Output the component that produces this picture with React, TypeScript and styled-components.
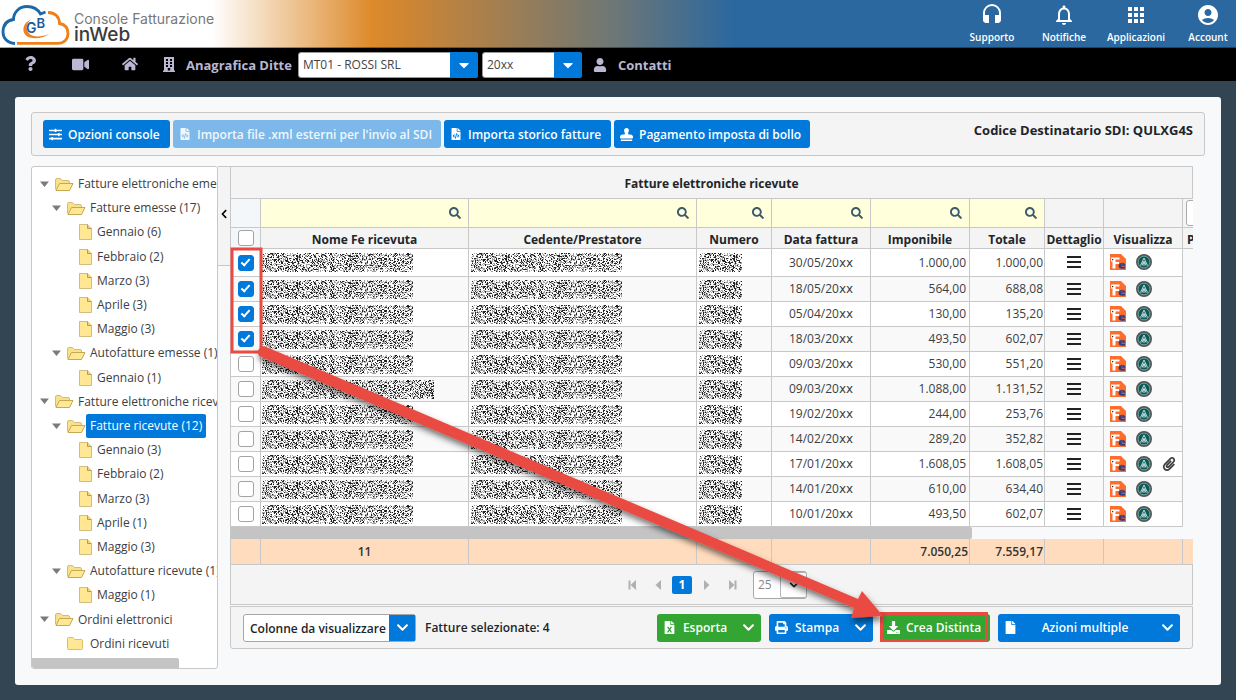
import React from "react";
import styled, { createGlobalStyle, css } from "styled-components";
import {
  FaQuestion,
  FaVideo,
  FaHome,
  FaUser,
  FaFileCode,
  FaStamp,
  FaSearch,
  FaPaperclip,
  FaFileExcel,
  FaPrint,
  FaDownload,
  FaFile,
  FaChevronDown,
  FaChevronLeft,
  FaCaretDown,
  FaSlidersH,
} from "react-icons/fa";
import { MdHeadset, MdNotificationsNone, MdApps, MdAccountCircle } from "react-icons/md";

const blue = "#0079da";
const green = "#33a532";
const red = "#e94b43";
const line = "#c8c8c8";
const nav = "#b9b7d2";

const Global = createGlobalStyle`
  *, *::before, *::after { box-sizing: border-box; }
  body {
    margin: 0;
    background: #334552;
    color: #212529;
    font-family: "Open Sans", "Noto Sans", sans-serif;
    font-size: 12px;
  }
  button, input, select { font: inherit; color: inherit; margin: 0; }
  svg { display: block; flex: none; }
`;

/* ---------- header ---------- */

const Header = styled.header`
  display: flex;
  justify-content: space-between;
  align-items: center;
  height: 48px;
  border-bottom: 1px solid rgba(0, 0, 0, 0.35);
  background: linear-gradient(90deg, #fff 212px, #dd8a2b 372px, #cc8534 410px, #6a7678 620px, #2b689f 735px);
`;

const Brand = styled.div`
  display: flex;
  align-items: center;
  gap: 4px;
  padding-left: 1px;
`;

const BrandText = styled.div`
  display: flex;
  flex-direction: column;
  padding-top: 7px;
  font-family: Inter, "Open Sans", sans-serif;
  font-size: 14px;
  line-height: 16px;
  color: #77787b;
  white-space: nowrap;
  strong {
    font-size: 19px;
    font-weight: 500;
    color: #3b3b3d;
  }
`;

const QuickLinks = styled.nav`
  display: flex;
  gap: 16px;
`;

const QuickLink = styled.a`
  display: flex;
  flex-direction: column;
  align-items: center;
  gap: 3px;
  width: 56px;
  color: #fff;
  font-size: 10px;
  line-height: 14px;
  font-weight: 600;
  text-decoration: none;
`;

/* ---------- black navigation bar ---------- */

const NavBar = styled.nav`
  display: flex;
  align-items: center;
  height: 33px;
  padding-left: 21px;
  background: #000;
  color: ${nav};
`;

const NavIcons = styled.div`
  display: flex;
  gap: 32px;
  margin-right: 24px;
`;

const NavIcon = styled.a`
  display: flex;
  justify-content: center;
  width: 18px;
  color: inherit;
`;

const NavLink = styled.a`
  display: flex;
  align-items: center;
  gap: 11px;
  padding-right: 2px;
  color: inherit;
  font-size: 13px;
  font-weight: 700;
  text-decoration: none;
  white-space: nowrap;
`;

const Contacts = styled(NavLink)`
  margin-left: 11px;
`;

const Picker = styled.label<{ $width: number }>`
  display: flex;
  width: ${(p) => p.$width}px;
  height: 26px;
  margin-left: 4px;
  position: relative;
  select {
    width: 100%;
    padding: 0 32px 0 4px;
    border: 1px solid #999;
    border-radius: 3px;
    background: #fff;
    color: #444;
    appearance: none;
  }
`;

const PickerCaret = styled.span`
  position: absolute;
  top: 0;
  right: 0;
  bottom: 0;
  display: flex;
  align-items: center;
  justify-content: center;
  width: 28px;
  border-radius: 0 3px 3px 0;
  background: ${blue};
  color: #fff;
  pointer-events: none;
`;

/* ---------- page card ---------- */

const Card = styled.main`
  margin: 16px 15px 15px;
  padding: 15px 16px 16px;
  border-radius: 3px;
  background: #f8f9fb;
`;

const Toolbar = styled.div`
  display: flex;
  align-items: center;
  gap: 3px;
  height: 44px;
  margin-bottom: 10px;
  padding: 0 11px;
  border: 1px solid ${line};
  border-radius: 3px;
  background: #f4f4f4;
`;

const Button = styled.button<{ $tone?: string; $width?: number }>`
  display: flex;
  align-items: center;
  gap: 6px;
  height: 28px;
  width: ${(p) => (p.$width ? p.$width + "px" : "auto")};
  padding: 0 6px;
  border: 0;
  border-radius: 3px;
  background: ${(p) => p.$tone || blue};
  color: #fff;
  font-weight: 600;
  white-space: nowrap;
  position: relative;
  &:disabled {
    background: #7cb8e9;
    color: #eff7fd;
  }
`;

const ButtonLabel = styled.span`
  flex: 1;
  padding-right: 8px;
  text-align: center;
`;

const Marker = styled.span`
  position: absolute;
  inset: -2px 2px 0 -1px;
  border: 3px solid ${red};
`;

const Recipient = styled.div`
  align-self: flex-start;
  margin-left: auto;
  padding-top: 8px;
  font-size: 13px;
  line-height: 18px;
  font-weight: 700;
  white-space: nowrap;
`;

const Columns = styled.div`
  display: flex;
  align-items: flex-start;
  padding-right: 12px;
`;

/* ---------- tree ---------- */

const TreePanel = styled.aside`
  display: flex;
  flex-direction: column;
  flex: none;
  width: 187px;
  height: 503px;
  padding-top: 5px;
  border: 1px solid ${line};
  border-radius: 3px;
  background: #fff;
  overflow: hidden;
`;

const TreeList = styled.ul`
  display: grid;
  grid-auto-rows: 1fr;
  flex: 1;
  margin: 0 0 2px;
  padding: 0;
  list-style: none;
`;

const TreeItem = styled.li<{ $pad: number }>`
  display: flex;
  align-items: center;
  padding-left: ${(p) => p.$pad}px;
  color: #3c4043;
  white-space: nowrap;
`;

const Toggle = styled.span`
  width: 15px;
  color: #7b7b7b;
`;

const TreeLabel = styled.a<{ $active?: boolean }>`
  padding: 3px 4px;
  line-height: 18px;
  border-radius: 2px;
  color: inherit;
  text-decoration: none;
  ${(p) =>
    p.$active &&
    css`
      background: ${blue};
      color: #fff;
    `}
`;

const TreeScroll = styled.div`
  width: 147px;
  height: 10px;
  border-radius: 0 2px 0 2px;
  background: #c4c4c4;
`;

const Splitter = styled.button`
  display: flex;
  align-items: center;
  justify-content: center;
  flex: none;
  width: 12px;
  height: 100px;
  padding: 0 0 4px;
  border: 0;
  border-top: 1px solid ${line};
  border-bottom: 1px solid ${line};
  background: #f4f4f4;
  color: #000;
`;

/* ---------- grid ---------- */

const GridPanel = styled.section`
  flex: 1;
  min-width: 0;
  position: relative;
`;

const GridTitle = styled.h2`
  margin: 0;
  height: 33px;
  border: 1px solid ${line};
  background: #f4f4f4;
  font-size: 12px;
  line-height: 33px;
  font-weight: 700;
  text-align: center;
`;

const GridClip = styled.div`
  border-left: 1px solid ${line};
  overflow: hidden;
`;

const Table = styled.table`
  width: 100%;
  border-collapse: separate;
  border-spacing: 0;
  table-layout: fixed;
`;

const FilterCell = styled.td<{ $tone?: string }>`
  height: 29px;
  padding: 0;
  border-right: 1px solid ${line};
  border-bottom: 1px solid ${line};
  background: ${(p) => p.$tone || "#f4f4f4"};
  overflow: hidden;
  &:last-child {
    border-right: 0;
  }
`;

const HeadCell = styled.th<{ $plain?: boolean }>`
  height: 21px;
  padding: ${(p) => (p.$plain ? 0 : 3)}px 0 0;
  border-right: 1px solid ${line};
  border-bottom: 1px solid ${line};
  background: ${(p) => (p.$plain ? "#f3f7fa" : "#f4f4f4")};
  font-weight: 700;
  line-height: 17px;
  white-space: nowrap;
  overflow: hidden;
  &:last-child {
    padding-left: 4px;
    border-right: 0;
    text-align: left;
  }
`;

const FilterField = styled.label`
  display: flex;
  align-items: center;
  padding-right: 7px;
  color: #3d5a6c;
  input {
    flex: 1;
    min-width: 0;
    height: 28px;
    border: 0;
    background: transparent;
  }
`;

const CutInput = styled.input`
  display: block;
  width: 60px;
  height: 26px;
  margin-left: 3px;
  border: 1px solid #aaa;
  border-radius: 3px;
  background: #fff;
`;

const Row = styled.tr<{ $first?: boolean; $shade?: boolean }>`
  td {
    height: ${(p) => (p.$first ? 28 : 25)}px;
    background: ${(p) => (p.$shade ? "#f9f9f9" : "#fff")};
  }
  td:last-child {
    background: none;
  }
`;

const Cell = styled.td<{ $align?: string; $pad?: number }>`
  padding: 0 ${(p) => p.$pad ?? 0}px;
  border-right: 1px solid ${line};
  border-bottom: 1px solid ${line};
  line-height: 18px;
  color: #3c4043;
  text-align: ${(p) => p.$align || "left"};
  white-space: nowrap;
`;

const Check = styled.input`
  display: block;
  appearance: none;
  width: 16px;
  height: 16px;
  margin: 0 auto;
  border: 1px solid #a3a3a3;
  border-radius: 3px;
  background: #fff;
  &:checked {
    border-color: ${blue};
    background: ${blue};
  }
  &:checked::before {
    content: "";
    display: block;
    width: 5px;
    height: 9px;
    margin: 1px auto 0;
    border: solid #fff;
    border-width: 0 2px 2px 0;
    transform: rotate(42deg);
  }
`;

const Masked = styled.span`
  font-family: "DejaVu Sans", sans-serif;
`;

const IconButton = styled.button`
  display: block;
  margin: 0 auto;
  padding: 0;
  border: 0;
  background: none;
`;

const IconRow = styled.div`
  display: flex;
  align-items: center;
  gap: 10px;
  padding: 0 0 1px 6px;
`;

const ScrollCell = styled.td`
  height: 12px;
  padding: 0;
`;

const ScrollThumb = styled.div`
  width: 77%;
  height: 12px;
  border-radius: 0 2px 2px 0;
  background: #c4c4c4;
`;

const TotalCell = styled.td<{ $align?: string }>`
  height: 25px;
  padding: 0 1px;
  border-right: 1px solid ${line};
  background: #ffdcbd;
  font-weight: 600;
  color: #333;
  text-align: ${(p) => p.$align || "center"};
  &:last-child {
    border-right: 0;
  }
`;

const Pager = styled.div`
  display: flex;
  align-items: center;
  justify-content: center;
  gap: 5px;
  height: 41px;
  padding-left: 6px;
  border: 1px solid ${line};
  background: #f4f4f4;
  color: #b0b0b0;
`;

const PageButton = styled.button<{ $current?: boolean }>`
  display: flex;
  align-items: center;
  justify-content: center;
  width: 20px;
  height: 18px;
  padding: 0;
  border: 0;
  border-radius: 2px;
  background: ${(p) => (p.$current ? blue : "none")};
  color: ${(p) => (p.$current ? "#fff" : "#b0b0b0")};
  font-weight: 700;
`;

const PageSize = styled.label`
  display: flex;
  position: relative;
  margin-left: 6px;
  select {
    width: 54px;
    height: 28px;
    padding: 0 4px;
    border: 1px solid #a8a8a8;
    border-radius: 3px;
    background: #fff;
    color: #888;
    appearance: none;
  }
`;

const PageSizeCaret = styled.span`
  position: absolute;
  top: 1px;
  right: 0;
  bottom: 1px;
  display: flex;
  align-items: center;
  justify-content: center;
  width: 27px;
  border: 1px solid #b5b5b5;
  border-radius: 2px;
  color: #222;
  pointer-events: none;
`;

const ActionBar = styled.div`
  display: flex;
  align-items: center;
  gap: 8px;
  height: 43px;
  margin-top: 1px;
  padding: 0 12px;
  border: 1px solid ${line};
  border-radius: 0 0 3px 3px;
  background: #f4f4f4;
`;

const ColumnChooser = styled.button`
  display: flex;
  align-items: stretch;
  justify-content: space-between;
  width: 173px;
  height: 28px;
  padding: 0 0 0 6px;
  border: 1px solid #a6a6a6;
  border-radius: 3px;
  background: #fff;
  font-weight: 600;
  line-height: 27px;
  white-space: nowrap;
`;

const ChooserCaret = styled.span`
  display: flex;
  align-items: center;
  justify-content: center;
  width: 26px;
  background: ${blue};
  color: #fff;
`;

const Selected = styled.span`
  margin-right: auto;
  padding-left: 1px;
  font-weight: 600;
  white-space: nowrap;
`;

const ArrowLayer = styled.svg`
  position: absolute;
  top: 0;
  left: 0;
  overflow: visible;
  pointer-events: none;
`;

const Defs = styled.svg`
  position: absolute;
`;

/* ---------- drawings ---------- */

function Logo() {
  return (
    <svg width="69" height="46" viewBox="0 0 69 46" fill="none" aria-hidden="true">
      <path
        d="M14 42.500C6 42 2 37 2 31C2 24 6 19.500 12.500 18.500C12.500 11 18.500 5.500 26 5.500C32 5.500 37 8.500 39.500 13L44.500 11"
        stroke="#1d68a7"
        strokeWidth="2.800"
      />
      <path
        d="M47 11.500C54 11.500 58.500 16 58.500 22.500C64 23.500 67 27.500 67 32.500C67 38.500 62.500 42.300 57 42.300H16"
        stroke="#f08019"
        strokeWidth="2.800"
      />
      <path d="M30 18.500C23 21 20 29 24.500 34C29.500 39 41 38 48.500 33C41 36 32 36.500 28.500 33C24.500 28.500 25 22 30 18.500Z" fill="#f08019" />
      <text x="25" y="32" fontFamily="Inter, sans-serif" fontWeight="600" fontSize="14" fill="#1d5c9c">
        G<tspan dy="-5" fontSize="13">B</tspan>
      </text>
    </svg>
  );
}

function BuildingIcon() {
  return (
    <svg width="12" height="15" viewBox="0 0 12 15" fill="currentColor" aria-hidden="true">
      <path
        fillRule="evenodd"
        d="M1 0h10v13.500h1V15H0v-1.500h1zM3 2v2h2V2zm4 0v2h2V2zM3 5v2h2V5zm4 0v2h2V5zM3 8v2h2V8zm4 0v2h2V8zM4.800 11v2.500h2.400V11z"
      />
    </svg>
  );
}

function FolderOpen() {
  return (
    <svg width="20" height="15" viewBox="0 0 20 15" aria-hidden="true">
      <path d="M1.500 12.500V3Q1.500 1.500 3 1.500H6.500L8.500 3.500H14Q15.500 3.500 15.500 5V7" fill="#fbe08a" stroke="#d2bc7a" />
      <path d="M2 13.500L5.500 6.500H19L15.500 13.500Z" fill="#ffe793" stroke="#c4a957" />
    </svg>
  );
}

function FolderClosed() {
  return (
    <svg width="20" height="15" viewBox="0 0 20 15" aria-hidden="true">
      <path
        d="M1.500 12.500V2.500Q1.500 1.500 2.500 1.500H7L9 3.500H15.500Q16.500 3.500 16.500 4.500V12.500Q16.500 13.500 15.500 13.500H2.500Q1.500 13.500 1.500 12.500Z"
        fill="#ffe793"
        stroke="#d9be6c"
      />
    </svg>
  );
}

function Sheet() {
  return (
    <svg width="15" height="18" viewBox="0 0 15 18" aria-hidden="true">
      <path d="M1.500 1.500H9.500L13.500 5.500V16.500H1.500Z" fill="#ffe793" stroke="#d0bd84" />
      <path d="M9.500 1.500V5.500H13.500" fill="#f3d572" stroke="#b99c4e" />
    </svg>
  );
}

function Lines() {
  return (
    <svg width="14" height="13" viewBox="0 0 14 13" fill="#222" aria-hidden="true">
      <path d="M0 0h14v2H0zM0 5h14v2H0zM0 10h14v2H0z" />
    </svg>
  );
}

function InvoiceIcon() {
  return (
    <svg width="16" height="16" viewBox="0 0 16 16" aria-hidden="true">
      <path d="M0 0H11L16 5V16H0Z" fill="#ff6d2d" />
      <path d="M1 3.500H9.500V5.500H5.500V8H9V10H5.500V14.500H2.500V7.500H1Z" fill="#fff" />
      <path d="M2 5h1.200v1.200H2z" fill="#333" />
      <path
        fillRule="evenodd"
        d="M8.500 11.200A3.600 3.600 0 0 1 15.500 11.700H11Q11.500 13.200 15 12.500V14.400Q8.500 16 8.500 11.200ZM11 10.300H13.300Q12.300 8.500 11 10.300Z"
        fill="#2c3f86"
      />
    </svg>
  );
}

function AgencyIcon() {
  return (
    <svg width="16" height="16" viewBox="0 0 16 16" fill="none" aria-hidden="true">
      <circle cx="8" cy="8" r="7.200" fill="#0c5a57" stroke="#555" strokeWidth="1.600" />
      <circle cx="8" cy="8" r="5.900" stroke="#a9bdb9" strokeWidth="0.700" />
      <path d="M4.500 11.500L8 4L11.500 11.500M6 11.500L8 7.200L10 11.500M8 8.500V12M6.200 9H9.800" stroke="#cfe6e2" strokeWidth="0.900" />
    </svg>
  );
}

/* Pixel noise that hides the confidential columns. */
const noiseWidth = 172;
const noiseHeight = 19;

function buildNoise() {
  let seed = 20731;
  const next = () => {
    seed = (seed * 1103515245 + 12345) % 2147483648;
    return seed / 2147483648;
  };
  let dark = "";
  let mid = "";
  for (let y = 0; y < noiseHeight; y++) {
    for (let x = 0; x < noiseWidth; x++) {
      const v = next();
      if (v < 0.22) dark += `M${x} ${y}h1v1h-1z`;
      else if (v < 0.5) mid += `M${x} ${y}h1v1h-1z`;
    }
  }
  return { dark, mid };
}

const noise = buildNoise();

function NoiseSource() {
  return (
    <Defs width="0" height="0" aria-hidden="true">
      <defs>
        <g id="noise">
          <path d={noise.dark} fill="#222" />
          <path d={noise.mid} fill="#a2a2a2" />
        </g>
      </defs>
    </Defs>
  );
}

function Redacted({ width }: { width: number }) {
  return (
    <svg width={width} height={noiseHeight} role="img" aria-label="Dato oscurato">
      <use href="#noise" />
    </svg>
  );
}

function PageGlyph({ kind }: { kind: "first" | "prev" | "next" | "last" }) {
  const flip = kind === "next" || kind === "last";
  const bar = kind === "first" || kind === "last";
  return (
    <svg width="9" height="10" viewBox="0 0 9 10" fill="currentColor" aria-hidden="true">
      <g transform={flip ? "matrix(-1 0 0 1 9 0)" : undefined}>
        <path d="M8 0V10L2.500 5Z" />
        {bar && <path d="M0.500 0.500h2v9h-2z" />}
      </g>
    </svg>
  );
}

/* ---------- data ---------- */

type Node = { depth: number; label: string; kind: "open" | "closed" | "sheet"; active?: boolean };

const tree: Node[] = [
  { depth: 0, label: "Fatture elettroniche emesse (18)", kind: "open" },
  { depth: 1, label: "Fatture emesse (17)", kind: "open" },
  { depth: 2, label: "Gennaio (6)", kind: "sheet" },
  { depth: 2, label: "Febbraio (2)", kind: "sheet" },
  { depth: 2, label: "Marzo (3)", kind: "sheet" },
  { depth: 2, label: "Aprile (3)", kind: "sheet" },
  { depth: 2, label: "Maggio (3)", kind: "sheet" },
  { depth: 1, label: "Autofatture emesse (1)", kind: "open" },
  { depth: 2, label: "Gennaio (1)", kind: "sheet" },
  { depth: 0, label: "Fatture elettroniche ricevute (13)", kind: "open" },
  { depth: 1, label: "Fatture ricevute (12)", kind: "open", active: true },
  { depth: 2, label: "Gennaio (3)", kind: "sheet" },
  { depth: 2, label: "Febbraio (2)", kind: "sheet" },
  { depth: 2, label: "Marzo (3)", kind: "sheet" },
  { depth: 2, label: "Aprile (1)", kind: "sheet" },
  { depth: 2, label: "Maggio (3)", kind: "sheet" },
  { depth: 1, label: "Autofatture ricevute (1)", kind: "open" },
  { depth: 2, label: "Maggio (1)", kind: "sheet" },
  { depth: 0, label: "Ordini elettronici", kind: "open" },
  { depth: 1, label: "Ordini ricevuti", kind: "closed" },
];

const invoices = [
  { date: "30/05/20", net: "1.000,00", total: "1.000,00", checked: true },
  { date: "18/05/20", net: "564,00", total: "688,08", checked: true },
  { date: "05/04/20", net: "130,00", total: "135,20", checked: true },
  { date: "18/03/20", net: "493,50", total: "602,07", checked: true },
  { date: "09/03/20", net: "530,00", total: "551,20" },
  { date: "09/03/20", net: "1.088,00", total: "1.131,52", long: true },
  { date: "19/02/20", net: "244,00", total: "253,76" },
  { date: "14/02/20", net: "289,20", total: "352,82" },
  { date: "17/01/20", net: "1.608,05", total: "1.608,05", clip: true },
  { date: "14/01/20", net: "610,00", total: "634,40" },
  { date: "10/01/20", net: "493,50", total: "602,07" },
];

const filters = ["Nome Fe ricevuta", "Cedente/Prestatore", "Numero", "Data fattura", "Imponibile", "Totale"];
const headings = [...filters, "Dettaglio", "Visualizza", "P"];

function Tree() {
  return (
    <TreePanel>
      <TreeList>
        {tree.map((n, i) => (
          <TreeItem key={i} $pad={7 + n.depth * 12 + (n.kind === "open" ? 0 : 15)}>
            {n.kind === "open" && (
              <Toggle>
                <svg width="11" height="7" viewBox="0 0 11 7" fill="currentColor" aria-hidden="true">
                  <path d="M1 0.500H10L5.500 6Z" />
                </svg>
              </Toggle>
            )}
            {n.kind === "open" && <FolderOpen />}
            {n.kind === "closed" && <FolderClosed />}
            {n.kind === "sheet" && <Sheet />}
            <TreeLabel href="#" $active={n.active}>
              {n.label}
            </TreeLabel>
          </TreeItem>
        ))}
      </TreeList>
      <TreeScroll />
    </TreePanel>
  );
}

function InvoiceTable() {
  return (
    <GridClip>
      <Table>
        <colgroup>
          <col width="30" />
          <col width="208" />
          <col />
          <col width="75" />
          <col width="99" />
          <col width="99" />
          <col width="75" />
          <col width="59" />
          <col width="79" />
          <col width="10" />
        </colgroup>
        <thead>
          <tr>
            <FilterCell $tone="#f3f7fa" />
            {filters.map((f) => (
              <FilterCell key={f} $tone="#ffffdc">
                <FilterField>
                  <input type="text" aria-label={"Filtra " + f} />
                  <FaSearch size={12} />
                </FilterField>
              </FilterCell>
            ))}
            <FilterCell />
            <FilterCell />
            <FilterCell>
              <CutInput type="text" aria-label="Filtro" />
            </FilterCell>
          </tr>
          <tr>
            <HeadCell $plain>
              <Check type="checkbox" aria-label="Seleziona tutte" />
            </HeadCell>
            {headings.map((h) => (
              <HeadCell key={h}>{h}</HeadCell>
            ))}
          </tr>
        </thead>
        <tbody>
          {invoices.map((r, i) => (
            <Row key={i} $first={i === 0} $shade={i % 2 === 1}>
              <Cell>
                <Check type="checkbox" defaultChecked={r.checked} aria-label={"Seleziona riga " + (i + 1)} />
              </Cell>
              <Cell $pad={1}>
                <Redacted width={r.long ? 172 : 151} />
              </Cell>
              <Cell $pad={2}>
                <Redacted width={151} />
              </Cell>
              <Cell $pad={2}>
                <Redacted width={43} />
              </Cell>
              <Cell $align="center">
                {r.date}
                <Masked>xx</Masked>
              </Cell>
              <Cell $align="right" $pad={3}>
                {r.net}
              </Cell>
              <Cell $align="right" $pad={1}>
                {r.total}
              </Cell>
              <Cell>
                <IconButton type="button" aria-label="Dettaglio">
                  <Lines />
                </IconButton>
              </Cell>
              <Cell>
                <IconRow>
                  <InvoiceIcon />
                  <AgencyIcon />
                  {r.clip && <FaPaperclip size={14} />}
                </IconRow>
              </Cell>
              <td />
            </Row>
          ))}
        </tbody>
        <tfoot>
          <tr>
            <ScrollCell colSpan={10}>
              <ScrollThumb />
            </ScrollCell>
          </tr>
          <tr>
            <TotalCell />
            <TotalCell>11</TotalCell>
            <TotalCell />
            <TotalCell />
            <TotalCell />
            <TotalCell $align="right">7.050,25</TotalCell>
            <TotalCell $align="right">7.559,17</TotalCell>
            <TotalCell />
            <TotalCell />
            <TotalCell />
          </tr>
        </tfoot>
      </Table>
    </GridClip>
  );
}

export default function App() {
  return (
    <>
      <Global />
      <NoiseSource />
      <Header>
        <Brand>
          <Logo />
          <BrandText>
            <span>Console Fatturazione</span>
            <strong>inWeb</strong>
          </BrandText>
        </Brand>
        <QuickLinks>
          <QuickLink href="#">
            <MdHeadset size={24} />
            Supporto
          </QuickLink>
          <QuickLink href="#">
            <MdNotificationsNone size={24} />
            Notifiche
          </QuickLink>
          <QuickLink href="#">
            <MdApps size={24} />
            Applicazioni
          </QuickLink>
          <QuickLink href="#">
            <MdAccountCircle size={24} />
            Account
          </QuickLink>
        </QuickLinks>
      </Header>
      <NavBar>
        <NavIcons>
          <NavIcon href="#" aria-label="Aiuto">
            <FaQuestion size={15} />
          </NavIcon>
          <NavIcon href="#" aria-label="Video">
            <FaVideo size={17} />
          </NavIcon>
          <NavIcon href="#" aria-label="Home">
            <FaHome size={16} />
          </NavIcon>
        </NavIcons>
        <NavLink href="#">
          <BuildingIcon />
          Anagrafica Ditte
        </NavLink>
        <Picker $width={180}>
          <select aria-label="Ditta">
            <option>MT01 - ROSSI SRL</option>
          </select>
          <PickerCaret>
            <FaCaretDown size={16} />
          </PickerCaret>
        </Picker>
        <Picker $width={100}>
          <select aria-label="Anno">
            <option>20xx</option>
          </select>
          <PickerCaret>
            <FaCaretDown size={16} />
          </PickerCaret>
        </Picker>
        <Contacts href="#">
          <FaUser size={14} />
          Contatti
        </Contacts>
      </NavBar>
      <Card>
        <Toolbar>
          <Button type="button" $width={127}>
            <FaSlidersH size={13} />
            Opzioni console
          </Button>
          <Button type="button" $width={268} disabled>
            <FaFileCode size={12} />
            <ButtonLabel>Importa file .xml esterni per l'invio al SDI</ButtonLabel>
          </Button>
          <Button type="button" $width={167}>
            <FaFileCode size={12} />
            <ButtonLabel>Importa storico fatture</ButtonLabel>
          </Button>
          <Button type="button" $width={196}>
            <FaStamp size={13} />
            Pagamento imposta di bollo
          </Button>
          <Recipient>Codice Destinatario SDI: QULXG4S</Recipient>
        </Toolbar>
        <Columns>
          <Tree />
          <Splitter type="button" aria-label="Comprimi">
            <FaChevronLeft size={10} />
          </Splitter>
          <GridPanel>
            <GridTitle>Fatture elettroniche ricevute</GridTitle>
            <InvoiceTable />
            <Pager>
              <PageButton type="button" aria-label="Prima pagina">
                <PageGlyph kind="first" />
              </PageButton>
              <PageButton type="button" aria-label="Pagina precedente">
                <PageGlyph kind="prev" />
              </PageButton>
              <PageButton type="button" $current>
                1
              </PageButton>
              <PageButton type="button" aria-label="Pagina successiva">
                <PageGlyph kind="next" />
              </PageButton>
              <PageButton type="button" aria-label="Ultima pagina">
                <PageGlyph kind="last" />
              </PageButton>
              <PageSize>
                <select aria-label="Righe per pagina">
                  <option>25</option>
                </select>
                <PageSizeCaret>
                  <FaChevronDown size={10} />
                </PageSizeCaret>
              </PageSize>
            </Pager>
            <ActionBar>
              <ColumnChooser type="button">
                Colonne da visualizzare
                <ChooserCaret>
                  <FaChevronDown size={13} />
                </ChooserCaret>
              </ColumnChooser>
              <Selected>Fatture selezionate: 4</Selected>
              <Button type="button" $tone={green} $width={104}>
                <FaFileExcel size={13} />
                <ButtonLabel>Esporta</ButtonLabel>
                <FaChevronDown size={13} />
              </Button>
              <Button type="button" $width={104}>
                <FaPrint size={13} />
                <ButtonLabel>Stampa</ButtonLabel>
                <FaChevronDown size={13} />
              </Button>
              <Button type="button" $tone={green} $width={109}>
                <FaDownload size={13} />
                Crea Distinta
                <Marker />
              </Button>
              <Button type="button" $width={182}>
                <FaFile size={13} />
                <ButtonLabel>Azioni multiple</ButtonLabel>
                <FaChevronDown size={13} />
              </Button>
            </ActionBar>
            <ArrowLayer width="660" height="460" viewBox="0 0 660 460" aria-hidden="true">
              <defs>
                <filter id="shade" x="-5%" y="-5%" width="110%" height="115%">
                  <feDropShadow dx="1" dy="4" stdDeviation="3" floodColor="#000" floodOpacity="0.55" />
                </filter>
              </defs>
              <rect x="2" y="83" width="29" height="103" fill="none" stroke={red} strokeWidth="3" />
              <path
                d="M34 180L628 433L632 425L653 450L621 452L624 442L29 190Q25 183 34 180Z"
                fill={red}
                filter="url(#shade)"
              />
            </ArrowLayer>
          </GridPanel>
        </Columns>
      </Card>
    </>
  );
}
